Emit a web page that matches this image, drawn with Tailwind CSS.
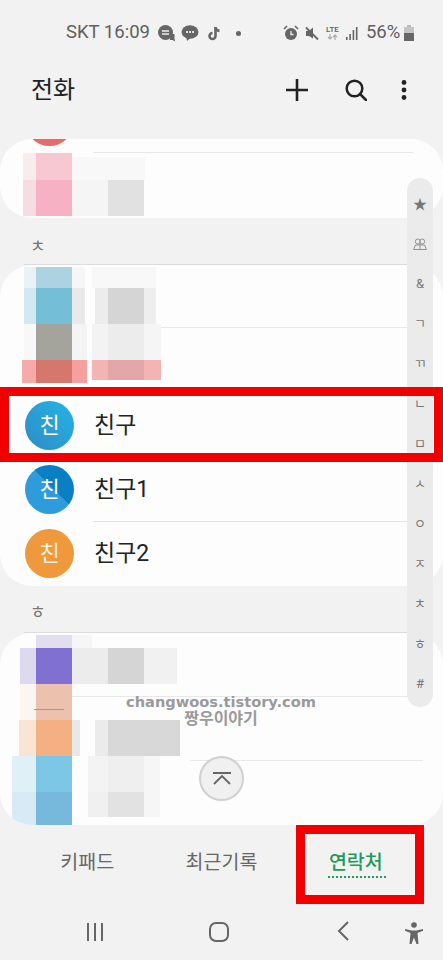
<!DOCTYPE html>
<html lang="ko">
<head>
    <meta charset="UTF-8">
    <meta name="viewport" content="width=device-width, initial-scale=1.0">
    <title>전화</title>
    <script src="https://cdn.jsdelivr.net/npm/@tailwindcss/browser@4"></script>
</head>
<body class="bg-[#f2f2f2]">
<div class="relative w-[443px] h-[960px] overflow-hidden flex flex-col bg-[#f2f2f2] font-['Roboto','Noto_Sans_CJK_KR',sans-serif]">

    <!-- status bar -->
    <div class="h-[66px] shrink-0 flex items-center pl-[66px] text-[#5f5f5f] text-[18.5px] whitespace-nowrap">
        <span>SKT 16:09</span>
        <svg class="ml-[8px] shrink-0" width="17" height="17" viewBox="0 0 17 17" fill="#666"><circle cx="7.5" cy="7.5" r="7.5"/><path d="M12 9h4.5v5l1 2.500-3-1.500h-2.500z"/><path d="M4 6h7M4 9h7" stroke="#eee" stroke-width="1.300"/></svg>
        <svg class="ml-[6px] shrink-0" width="18" height="17" viewBox="0 0 18 17" fill="#666"><ellipse cx="9" cy="7" rx="8.500" ry="6.800"/><path d="M5 11l1 5 4-3.500z"/><path d="M5 7h8" stroke="#ddd" stroke-width="2" stroke-dasharray="2 1"/></svg>
        <svg class="ml-[9px] shrink-0" width="13" height="15" viewBox="0 0 13 15" fill="none" stroke="#666" stroke-width="2.600"><path d="M7.500 1v9a3 3 0 1 1-3-3"/><path d="M7.500 1.500c.4 2 1.800 3.200 4 3.400"/></svg>
        <span class="ml-[15px] w-[5px] h-[5px] shrink-0 rounded-full bg-[#666]"></span>
        <svg class="ml-[42px] shrink-0" width="16" height="16" viewBox="0 0 16 16" fill="#666"><circle cx="8" cy="9" r="6"/><path d="M1 4l3-3M15 4l-3-3" stroke="#666" stroke-width="1.600"/><path d="M8 6v3.500h2.500" stroke="#eee" stroke-width="1.300" fill="none"/></svg>
        <svg class="ml-[5px] shrink-0" width="15" height="15" viewBox="0 0 15 15" fill="#666"><path d="M2 5h3l4-3.500v11L5 10H2z"/><path d="M2 1.500l12 12" stroke="#666" stroke-width="1.800"/></svg>
        <span class="ml-[6px] w-[15px] shrink-0 flex flex-col items-center leading-none">
            <span class="text-[8px] font-medium">LTE</span>
            <svg width="11" height="6" viewBox="0 0 11 6" stroke="#aaa" fill="none" stroke-width="1.200"><path d="M3 0v5M1 3l2 2 2-2M8 6V1M6 3l2-2 2 2"/></svg>
        </span>
        <svg class="ml-[6px] shrink-0" width="12" height="15" viewBox="0 0 12 15" fill="#666"><rect x="0" y="11" width="1.600" height="3"/><rect x="3.300" y="8" width="1.600" height="6"/><rect x="6.600" y="4" width="1.600" height="10"/><rect x="9.900" y="1" width="1.600" height="13"/></svg>
        <span class="ml-[8px]">56%</span>
        <svg class="ml-[4px] shrink-0" width="10" height="16" viewBox="0 0 10 16"><rect x="3" y="0" width="4" height="2" fill="#bbb"/><rect x="0" y="2" width="10" height="14" fill="#c4c4c4"/><rect x="0" y="8" width="10" height="8" fill="#666"/></svg>
    </div>

    <!-- header -->
    <div class="h-[48px] shrink-0 flex items-center pl-[31px] text-[#222]">
        <h1 class="text-[24px] font-normal leading-none">전화</h1>
        <svg class="ml-[211px]" width="22" height="22" viewBox="0 0 22 22" stroke="#222" stroke-width="2.600"><path d="M11 0v22M0 11h22"/></svg>
        <svg class="ml-[37px]" width="22" height="22" viewBox="0 0 22 22" fill="none" stroke="#222" stroke-width="2.500"><circle cx="9.500" cy="9.500" r="7.800"/><path d="M15 15l6 6" stroke-linecap="round"/></svg>
        <svg class="ml-[34px]" width="6" height="20" viewBox="0 0 6 20" fill="#222"><circle cx="3" cy="2.500" r="2.400"/><circle cx="3" cy="10" r="2.400"/><circle cx="3" cy="17.500" r="2.400"/></svg>
    </div>

    <!-- contact list -->
    <div class="h-[711px] shrink-0 overflow-hidden pt-[25px]">

        <section class="relative h-[79px] bg-[#fdfdfd] rounded-[32px] overflow-hidden">
            <div class="h-[14px] ml-[93px] mr-[30px] border-b border-[#e8e8e8]"></div>
            <span class="absolute left-[25px] top-[-42px] w-[49px] h-[49px] rounded-full bg-[#e76b6b]"></span>
            <!-- blurred entry -->
            <i class="absolute left-[23px] top-[14px] w-[13px] h-[27px] bg-[#f8eced]"></i>
            <i class="absolute left-[36px] top-[14px] w-[36px] h-[27px] bg-[#f7c7d2]"></i>
            <i class="absolute left-[72px] top-[18px] w-[73px] h-[23px] bg-[#f8f8f8]"></i>
            <i class="absolute left-[23px] top-[41px] w-[13px] h-[36px] bg-[#f6dde4]"></i>
            <i class="absolute left-[36px] top-[41px] w-[36px] h-[36px] bg-[#f6b1c5]"></i>
            <i class="absolute left-[72px] top-[41px] w-[36px] h-[36px] bg-[#f5f5f5]"></i>
            <i class="absolute left-[108px] top-[41px] w-[36px] h-[36px] bg-[#e1e1e1]"></i>
        </section>

        <div class="h-[47px] mx-[24px] border-b border-[#dcdcdc] pl-[6px] pt-[16px] text-[17px] leading-[24px] text-[#777]">ㅊ</div>

        <section class="relative h-[321px] bg-[#fdfdfd] rounded-[32px] overflow-hidden">
            <div class="h-[63px] ml-[93px] mr-[20px] border-b border-[#e8e8e8]"></div>
            <div class="h-[65px]"></div>
            <div class="h-[64px] flex items-center pl-[25px]">
                <span class="w-[49px] h-[49px] rounded-full bg-gradient-to-tr from-[#2d8cc4] to-[#22b4e6] text-white text-[22px] flex items-center justify-center">친</span>
                <span class="ml-[20px] pt-[2px] text-[23px] text-[#222]">친구</span>
            </div>
            <div class="h-[64px] flex items-center pl-[25px]">
                <span class="w-[49px] h-[49px] rounded-full bg-linear-[45deg,#2e9cdb_55%,#0b7fc4_55%] text-white text-[22px] flex items-center justify-center">친</span>
                <span class="ml-[20px] pt-[2px] text-[23px] text-[#222]">친구1</span>
            </div>
            <div class="relative">
                <div class="absolute top-0 left-[93px] right-[20px] border-t border-[#e4e4e4]"></div>
                <div class="h-[64px] flex items-center pl-[25px]">
                    <span class="w-[49px] h-[49px] rounded-full bg-[#ee9a3c] text-[#fdf0dc] text-[22px] flex items-center justify-center">친</span>
                    <span class="ml-[20px] pt-[2px] text-[23px] text-[#222]">친구2</span>
                </div>
            </div>
            <!-- blurred entries -->
            <i class="absolute left-[24px] top-[2px] w-[12px] h-[21px] bg-[#eaf2f5]"></i>
            <i class="absolute left-[36px] top-[2px] w-[36px] h-[21px] bg-[#add2e1]"></i>
            <i class="absolute left-[72px] top-[2px] w-[13px] h-[21px] bg-[#f6f6f6]"></i>
            <i class="absolute left-[92px] top-[2px] w-[64px] h-[21px] bg-[#f8f8f8]"></i>
            <i class="absolute left-[24px] top-[23px] w-[12px] h-[36px] bg-[#d2e9f1]"></i>
            <i class="absolute left-[36px] top-[23px] w-[36px] h-[36px] bg-[#74bfd6]"></i>
            <i class="absolute left-[72px] top-[23px] w-[13px] h-[36px] bg-[#e9e9e9]"></i>
            <i class="absolute left-[95px] top-[23px] w-[13px] h-[36px] bg-[#ececec]"></i>
            <i class="absolute left-[108px] top-[23px] w-[36px] h-[36px] bg-[#d5d5d5]"></i>
            <i class="absolute left-[144px] top-[23px] w-[12px] h-[36px] bg-[#eeeeee]"></i>
            <i class="absolute left-[24px] top-[59px] w-[12px] h-[36px] bg-[#f8f8f8]"></i>
            <i class="absolute left-[36px] top-[59px] w-[36px] h-[36px] bg-[#a5a49c]"></i>
            <i class="absolute left-[72px] top-[59px] w-[15px] h-[36px] bg-[#f4f4f4]"></i>
            <i class="absolute left-[92px] top-[59px] w-[16px] h-[36px] bg-[#f3f3f3]"></i>
            <i class="absolute left-[108px] top-[59px] w-[36px] h-[36px] bg-[#ececec]"></i>
            <i class="absolute left-[144px] top-[59px] w-[17px] h-[36px] bg-[#f5f5f5]"></i>
            <i class="absolute left-[22px] top-[95px] w-[14px] h-[23px] bg-[#f6aaa9]"></i>
            <i class="absolute left-[36px] top-[95px] w-[36px] h-[23px] bg-[#d5776d]"></i>
            <i class="absolute left-[72px] top-[95px] w-[15px] h-[23px] bg-[#f59f9f]"></i>
            <i class="absolute left-[92px] top-[95px] w-[16px] h-[20px] bg-[#f3b4b4]"></i>
            <i class="absolute left-[108px] top-[95px] w-[36px] h-[20px] bg-[#e3a7a7]"></i>
            <i class="absolute left-[144px] top-[95px] w-[17px] h-[20px] bg-[#f3b4b4]"></i>
        </section>

        <div class="h-[47px] mx-[24px] border-b border-[#dcdcdc] pl-[6px] pt-[14px] text-[17px] leading-[24px] text-[#777]">ㅎ</div>

        <section class="relative h-[192px] bg-[#fdfdfd] rounded-[32px] overflow-hidden">
            <div class="h-[64px] ml-[72px] mr-[20px] border-b border-[#e8e8e8]"></div>
            <div class="h-[64px] ml-[190px] mr-[20px] border-b border-[#e8e8e8]"></div>
            <!-- blurred entries -->
            <i class="absolute left-[36px] top-[2px] w-[36px] h-[13px] bg-[#e2deef]"></i>
            <i class="absolute left-[72px] top-[2px] w-[20px] h-[13px] bg-[#f6f6f6]"></i>
            <i class="absolute left-[20px] top-[15px] w-[16px] h-[36px] bg-[#ddd9ee]"></i>
            <i class="absolute left-[36px] top-[15px] w-[36px] h-[36px] bg-[#8070d2]"></i>
            <i class="absolute left-[72px] top-[15px] w-[36px] h-[36px] bg-[#ececec]"></i>
            <i class="absolute left-[108px] top-[15px] w-[36px] h-[36px] bg-[#d5d5d5]"></i>
            <i class="absolute left-[144px] top-[15px] w-[33px] h-[36px] bg-[#f1f1f1]"></i>
            <i class="absolute left-[20px] top-[51px] w-[16px] h-[36px] bg-[#fcf6f2]"></i>
            <i class="absolute left-[36px] top-[51px] w-[36px] h-[36px] bg-[#ecc2ae]"></i>
            <i class="absolute left-[34px] top-[76px] w-[30px] h-[1px] bg-[#e5824f]"></i>
            <i class="absolute left-[19px] top-[87px] w-[17px] h-[36px] bg-[#fae4d4]"></i>
            <i class="absolute left-[36px] top-[87px] w-[36px] h-[36px] bg-[#f4b082]"></i>
            <i class="absolute left-[72px] top-[87px] w-[8px] h-[36px] bg-[#e8e8e8]"></i>
            <i class="absolute left-[95px] top-[87px] w-[13px] h-[36px] bg-[#ebebeb]"></i>
            <i class="absolute left-[108px] top-[87px] w-[72px] h-[36px] bg-[#d8d8d8]"></i>
            <i class="absolute left-[12px] top-[123px] w-[24px] h-[36px] bg-[#dff0f7]"></i>
            <i class="absolute left-[36px] top-[123px] w-[36px] h-[36px] bg-[#7cc6e6]"></i>
            <i class="absolute left-[88px] top-[123px] w-[20px] h-[36px] bg-[#f3f3f3]"></i>
            <i class="absolute left-[108px] top-[123px] w-[36px] h-[36px] bg-[#efefef]"></i>
            <i class="absolute left-[144px] top-[123px] w-[16px] h-[36px] bg-[#f6f6f6]"></i>
            <i class="absolute left-[12px] top-[159px] w-[24px] h-[33px] bg-[#d7eaf5]"></i>
            <i class="absolute left-[36px] top-[159px] w-[36px] h-[33px] bg-[#76b9dc]"></i>
            <i class="absolute left-[88px] top-[159px] w-[20px] h-[25px] bg-[#f0f0f0]"></i>
            <i class="absolute left-[108px] top-[159px] w-[36px] h-[25px] bg-[#e2e2e2]"></i>
            <i class="absolute left-[144px] top-[159px] w-[16px] h-[25px] bg-[#f6f6f6]"></i>
        </section>
    </div>

    <!-- tabs -->
    <div class="h-[75px] shrink-0 px-[20px] grid grid-cols-3 items-center text-[19.5px] text-[#666] text-center">
        <span>키패드</span>
        <span>최근기록</span>
        <span class="font-medium text-[#1e9a5c]">연락처</span>
    </div>

    <!-- navigation bar -->
    <div class="relative flex-1">
        <svg class="absolute left-[86px] top-[23px]" width="18" height="18" viewBox="0 0 18 18" stroke="#666" stroke-width="2"><path d="M2 0v18M9 0v18M16 0v18"/></svg>
        <svg class="absolute left-[209px] top-[22px]" width="20" height="20" viewBox="0 0 20 20" fill="none" stroke="#666" stroke-width="2"><rect x="1" y="1" width="18" height="18" rx="6"/></svg>
        <svg class="absolute left-[337px] top-[21px]" width="13" height="20" viewBox="0 0 13 20" fill="none" stroke="#666" stroke-width="2"><path d="M11 1L2 10l9 9"/></svg>
        <svg class="absolute left-[405px] top-[22px]" width="18" height="22" viewBox="0 0 18 22" fill="#666"><circle cx="9" cy="3" r="2.800"/><path d="M0 7l6.500 1.500h5L18 7v1.800l-5.500 2.200 1 11h-2L9 15.500 6.500 22h-2l1-11L0 8.800z"/></svg>
    </div>

    <!-- alphabet index rail -->
    <div class="absolute left-[407px] top-[178px] w-[26px] h-[529px] rounded-[13px] bg-[#ebebeb] pt-[6px] flex flex-col items-center text-[13px] text-[#777]">
        <span class="h-[40px] flex items-center text-[14px]">★</span>
        <span class="h-[40px] flex items-center">
            <svg width="14" height="12" viewBox="0 0 14 12" fill="none" stroke="#888" stroke-width="0.900"><path d="M0.500 11.500l2-4.500h9l2 4.500z"/><circle cx="4.800" cy="3.500" r="2.500"/><circle cx="9.200" cy="3.500" r="2.500"/><path d="M7 6v5"/></svg>
        </span>
        <span class="h-[40px] flex items-center">&amp;</span>
        <span class="h-[40px] flex items-center">ㄱ</span>
        <span class="h-[40px] flex items-center">ㄲ</span>
        <span class="h-[40px] flex items-center">ㄴ</span>
        <span class="h-[40px] flex items-center">ㅁ</span>
        <span class="h-[40px] flex items-center">ㅅ</span>
        <span class="h-[40px] flex items-center">ㅇ</span>
        <span class="h-[40px] flex items-center">ㅈ</span>
        <span class="h-[40px] flex items-center">ㅊ</span>
        <span class="h-[40px] flex items-center">ㅎ</span>
        <span class="h-[40px] flex items-center">#</span>
    </div>

    <!-- scroll to top -->
    <div class="absolute left-[199px] top-[756px] w-[45px] h-[45px] rounded-full bg-[#f0f0f0] border-2 border-[#d0d0d0] flex items-center justify-center">
        <svg width="20" height="13" viewBox="0 0 20 13" fill="none" stroke="#666" stroke-width="1.800"><path d="M1 1h18M2 12l8-8 8 8"/></svg>
    </div>

    <!-- watermark -->
    <div class="absolute left-[96px] top-[694px] w-[250px] text-center text-[#9a9a9a] font-bold leading-none">
        <div class="text-[14.6px] font-['DejaVu_Sans','Noto_Sans_CJK_KR',sans-serif] leading-[16px]">changwoos.tistory.com</div>
        <div class="text-[16px] font-['Noto_Sans_CJK_KR',sans-serif] leading-[15px]">짱우이야기</div>
    </div>

    <!-- red highlight boxes -->
    <div class="absolute left-0 top-[387px] w-[443px] h-[75px] border-[9px] border-[#f00000]"></div>
    <div class="absolute left-[296px] top-[825px] w-[128px] h-[79px] border-[9px] border-[#f00000]"></div>
    <div class="absolute left-[328px] top-[876px] w-[58px] border-t-[2px] border-dotted border-[#1e9a5c]"></div>
</div>
</body>
</html>
